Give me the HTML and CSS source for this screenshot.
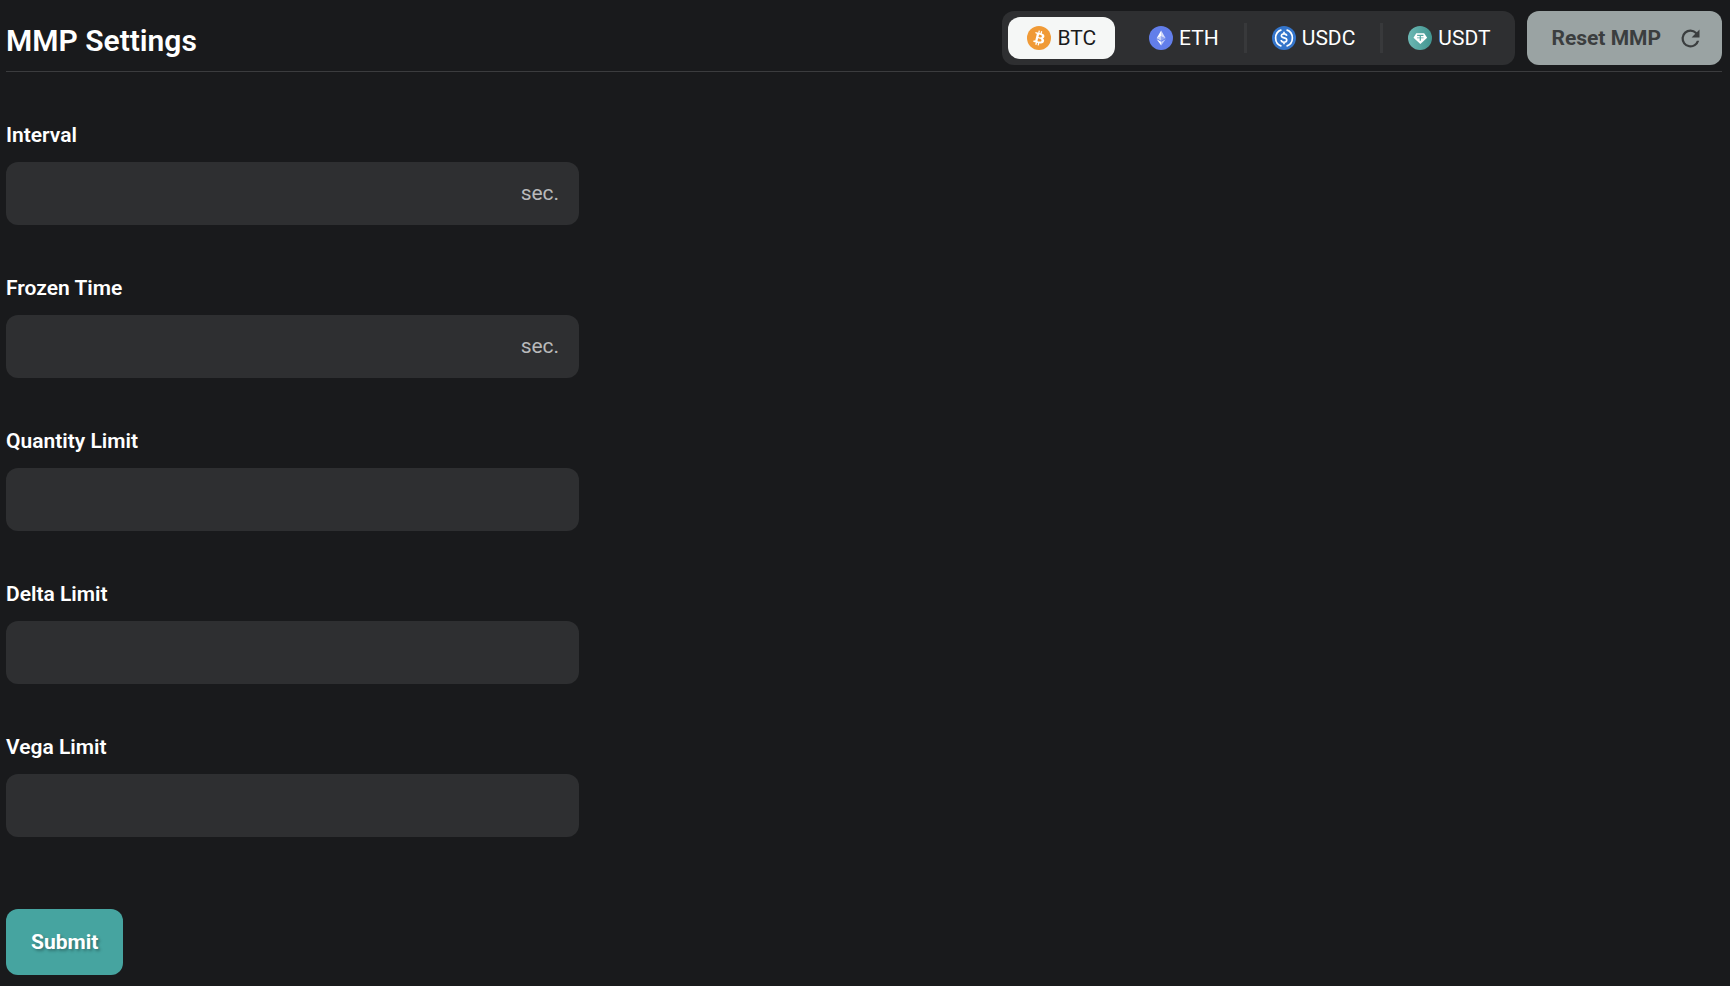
FILE: index.html
```html
<!DOCTYPE html>
<html lang="en">
<head>
<meta charset="utf-8">
<meta name="viewport" content="width=device-width, initial-scale=1">
<title>MMP Settings</title>
<link rel="stylesheet" href="styles.css">
</head>
<body>
<main class="page">
  <header class="header">
    <h1 class="title">MMP Settings</h1>
    <div class="actions">
      <nav class="tabs" aria-label="Currency">
        <button type="button" class="tab tab-active" aria-pressed="true">
          <svg class="coin" viewBox="0 0 32 32" aria-hidden="true">
            <circle cx="16" cy="16" r="16" fill="#f09a36"/>
            <path fill="#fff" d="M23.189 14.02c.314-2.096-1.283-3.223-3.465-3.975l.708-2.84-1.728-.43-.69 2.765c-.454-.114-.92-.22-1.385-.326l.695-2.783L15.596 6l-.708 2.839c-.376-.086-.746-.17-1.104-.26l.002-.009-2.384-.595-.46 1.846s1.283.294 1.256.312c.7.175.826.638.805 1.006l-.806 3.235c.048.012.11.03.18.057l-.183-.045-1.13 4.532c-.086.212-.303.531-.793.41.018.025-1.256-.313-1.256-.313l-.858 1.978 2.25.561c.418.105.828.215 1.231.318l-.715 2.872 1.727.43.708-2.84c.472.127.93.245 1.378.357l-.706 2.828 1.728.43.715-2.866c2.948.558 5.164.333 6.097-2.333.752-2.146-.037-3.385-1.588-4.192 1.13-.26 1.98-1.003 2.207-2.538zm-3.95 5.538c-.533 2.147-4.148.986-5.32.695l.95-3.805c1.172.293 4.929.872 4.37 3.11zm.535-5.569c-.487 1.953-3.495.96-4.47.717l.86-3.45c.975.243 4.118.696 3.61 2.733z"/>
          </svg>
          BTC
        </button>
        <span class="divider divider-clear"></span>
        <button type="button" class="tab" aria-pressed="false">
          <svg class="coin" viewBox="0 0 32 32" aria-hidden="true">
            <circle cx="16" cy="16" r="16" fill="#627eea"/>
            <path fill="#fff" fill-opacity=".75" d="M16.2 6v7.6l6 2.7z"/>
            <path fill="#fff" d="M16.2 6l-6 10.300l6-2.700z"/>
            <path fill="#fff" fill-opacity=".6" d="M16.200 21v5l6-8.500z"/>
            <path fill="#fff" d="M16.200 26v-5l-6-3.500z"/>
            <path fill="#fff" fill-opacity=".3" d="M16.200 19.800l6-3.500-6-2.700z"/>
            <path fill="#fff" fill-opacity=".65" d="M10.200 16.300l6 3.500v-6.200z"/>
          </svg>
          ETH
        </button>
        <span class="divider"></span>
        <button type="button" class="tab" aria-pressed="false">
          <svg class="coin" viewBox="0 0 32 32" aria-hidden="true">
            <circle cx="16" cy="16" r="16" fill="#3475cb"/>
            <g fill="none" stroke="#fff" stroke-width="2.200">
              <path d="M12.600 5.200a11.400 11.400 0 0 0 0 21.600M19.400 5.200a11.400 11.400 0 0 1 0 21.600"/>
              <path d="M19.600 13.200c-.2-1.800-1.500-2.800-3.600-2.800-2.200 0-3.500 1-3.500 2.700 0 4.100 7.200 1.500 7.200 5.600 0 1.800-1.500 2.900-3.700 2.900s-3.700-1-3.800-3M16 7.800v2.600M16 21.600v2.600"/>
            </g>
          </svg>
          USDC
        </button>
        <span class="divider"></span>
        <button type="button" class="tab" aria-pressed="false">
          <svg class="coin" viewBox="0 0 32 32" aria-hidden="true">
            <defs>
              <linearGradient id="teal" x1="0" y1="0" x2="1" y2="0">
                <stop offset="0" stop-color="#6cb8b4"/>
                <stop offset="1" stop-color="#429590"/>
              </linearGradient>
            </defs>
            <circle cx="16" cy="16" r="16" fill="url(#teal)"/>
            <path fill="#fff" d="M11 9.500h10.500l4 6-9 8.500-9.200-8.500z"/>
            <path fill="none" stroke="#55a6a2" stroke-width="1.600" d="M12.200 12.600h8.400M16.400 12.600v7"/>
            <path fill="none" stroke="#55a6a2" d="M12 15.800h8.800"/>
          </svg>
          USDT
        </button>
      </nav>
      <button type="button" class="reset">
        Reset MMP
        <svg class="refresh" viewBox="0 0 24 24" aria-hidden="true">
          <path fill="currentColor" d="M17.650 6.350A7.960 7.960 0 0 0 12 4a8 8 0 1 0 7.730 10h-2.080A6 6 0 1 1 12 6c1.660 0 3.140.690 4.220 1.780L13 11h7V4z"/>
        </svg>
      </button>
    </div>
  </header>

  <form class="form">
    <div class="group">
      <label class="label" for="interval">Interval</label>
      <div class="field"><input class="input" id="interval" type="text" inputmode="numeric"><span class="unit">sec.</span></div>
    </div>
    <div class="group">
      <label class="label" for="frozen">Frozen Time</label>
      <div class="field"><input class="input" id="frozen" type="text" inputmode="numeric"><span class="unit">sec.</span></div>
    </div>
    <div class="group">
      <label class="label" for="quantity">Quantity Limit</label>
      <div class="field"><input class="input" id="quantity" type="text" inputmode="decimal"></div>
    </div>
    <div class="group">
      <label class="label" for="delta">Delta Limit</label>
      <div class="field"><input class="input" id="delta" type="text" inputmode="decimal"></div>
    </div>
    <div class="group">
      <label class="label" for="vega">Vega Limit</label>
      <div class="field"><input class="input" id="vega" type="text" inputmode="decimal"></div>
    </div>
    <button type="submit" class="submit">Submit</button>
  </form>
</main>
</body>
</html>
```
FILE: styles.css
```css
* {
  box-sizing: border-box;
}

body {
  margin: 0;
  background: #191a1c;
  color: #fff;
  font-family: Roboto, "Liberation Sans", sans-serif;
  font-size: 21px;
  line-height: 30px;
}

button,
input {
  border: 0;
  font: inherit;
  color: inherit;
}

button {
  cursor: pointer;
}

.page {
  padding: 11px 8px 11px 6px;
}

.header {
  display: flex;
  align-items: center;
  justify-content: space-between;
  padding-bottom: 6px;
  border-bottom: 1px solid #3b3c3e;
}

.title {
  margin: 0;
  padding-top: 6px;
  font-size: 30px;
  font-weight: 600;
  line-height: 36px;
}

.actions {
  display: flex;
  gap: 12px;
}

.tabs {
  display: flex;
  align-items: center;
  gap: 6px;
  padding: 6px;
  border-radius: 12px;
  background: #2e2f31;
}

.tab {
  display: flex;
  align-items: center;
  gap: 6px;
  padding: 6px 19px;
  border-radius: 12px;
  background: transparent;
}

.tab-active {
  background: #f5f7f6;
  color: #1a1b1d;
}

.coin {
  width: 24px;
  height: 24px;
}

.divider {
  width: 3px;
  height: 30px;
  background: #38393b;
}

.divider-clear {
  background: transparent;
}

.reset {
  display: flex;
  align-items: center;
  gap: 16px;
  padding: 12px 18px 12px 24px;
  border-radius: 12px;
  background: #9aa3a3;
  color: #3b3e3f;
  font-weight: 700;
}

.refresh {
  width: 27px;
  height: 27px;
}

.form {
  display: flex;
  flex-direction: column;
  align-items: flex-start;
  padding-top: 48px;
}

.group {
  width: 33.4%;
  margin-bottom: 48px;
}

.label {
  display: block;
  margin-bottom: 12px;
  font-weight: 600;
}

.field {
  display: flex;
  align-items: center;
  height: 63px;
  border-radius: 12px;
  background: #2e2f31;
}

.input {
  flex: 1;
  min-width: 0;
  height: 100%;
  padding: 0 18px;
  background: transparent;
  outline: 0;
}

.field:focus-within {
  box-shadow: 0 0 0 2px #46a4a0;
}

.unit {
  padding: 0 20px 2px 0;
  color: #b9babb;
}

.submit {
  margin-top: 24px;
  padding: 18px 25px;
  border-radius: 12px;
  background: #46a4a0;
  font-weight: 700;
  text-shadow: 2px 2px 3px rgba(0, 0, 0, 0.3);
}
```
